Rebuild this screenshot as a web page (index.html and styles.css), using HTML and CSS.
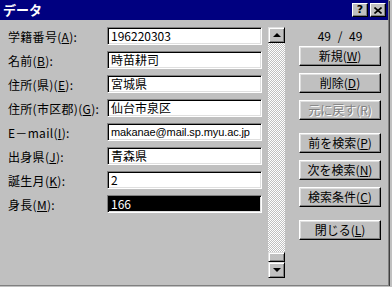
FILE: index.html
```html
<!DOCTYPE html>
<html lang="ja">
<head>
    <meta charset="UTF-8">
    <title>データ</title>
    <link rel="stylesheet" href="styles.css">
</head>
<body>
    <div class="window">
        <div class="titlebar">
            <span class="title">データ</span>
            <div class="caption-btns">
                <span class="cap-btn help">?</span>
                <span class="cap-btn close">
                    <svg width="8" height="7" viewBox="0 0 8 7"><path d="M0.5 0.5 L7.5 6.5 M7.5 0.5 L0.5 6.5" stroke="#000" stroke-width="1.6"/></svg>
                </span>
            </div>
        </div>
        <div class="content">
            <div class="form">
                <div class="row"><label>学籍番号(<u>A</u>):</label><div class="field">196220303</div></div>
                <div class="row"><label>名前(<u>B</u>):</label><div class="field">時苗耕司</div></div>
                <div class="row"><label>住所(県)(<u>E</u>):</label><div class="field">宮城県</div></div>
                <div class="row"><label>住所(市区郡)(<u>G</u>):</label><div class="field">仙台市泉区</div></div>
                <div class="row"><label>E－mail(<u>I</u>):</label><div class="field email">makanae@mail.sp.myu.ac.jp</div></div>
                <div class="row"><label>出身県(<u>J</u>):</label><div class="field">青森県</div></div>
                <div class="row"><label>誕生月(<u>K</u>):</label><div class="field">2</div></div>
                <div class="row"><label>身長(<u>M</u>):</label><div class="field selected">166</div></div>
            </div>
            <div class="scrollbar">
                <div class="sb-btn"><span class="arrow up"></span></div>
                <div class="sb-track"></div>
                <div class="sb-thumb"></div>
                <div class="sb-btn"><span class="arrow down"></span></div>
            </div>
            <div class="actions">
                <div class="counter">49 / 49</div>
                <button>新規(<u>W</u>)</button>
                <button>削除(<u>D</u>)</button>
                <button class="disabled">元に戻す(R)</button>
                <button class="spaced">前を検索(<u>P</u>)</button>
                <button>次を検索(<u>N</u>)</button>
                <button>検索条件(<u>C</u>)</button>
                <button class="spaced">閉じる(<u>L</u>)</button>
            </div>
        </div>
    </div>
</body>
</html>
```

FILE: styles.css
```css
body {
    margin: 0;
    background: #c0c0c0;
    font-family: "Noto Sans CJK JP", "DejaVu Sans", sans-serif;
    font-size: 12px;
    color: #000;
}
.window {
    width: 388px;
    height: 285px;
    background: #c0c0c0;
    border-right: 1px solid #808080;
    border-bottom: 1px solid #808080;
    box-shadow: 1px 1px 0 #404040;
}
.titlebar {
    height: 20px;
    background: #000080;
    display: flex;
    align-items: center;
    justify-content: space-between;
    padding: 0 2px 0 3px;
}
.title {
    color: #fff;
    font-weight: bold;
    font-size: 13px;
    line-height: 20px;
}
.caption-btns {
    display: flex;
    gap: 2px;
}
.cap-btn {
    width: 16px;
    height: 14px;
    box-sizing: border-box;
    background: #c0c0c0;
    border: 1px solid;
    border-color: #fff #000 #000 #fff;
    box-shadow: inset -1px -1px #808080;
    display: flex;
    align-items: center;
    justify-content: center;
    font-family: "DejaVu Sans", sans-serif;
    font-weight: bold;
    font-size: 11px;
    line-height: 12px;
}
.content {
    display: flex;
    padding: 7px 0 0 8px;
}
.form {
    display: flex;
    flex-direction: column;
    gap: 6px;
}
.row {
    display: flex;
    align-items: center;
    height: 18px;
}
.row label {
    width: 99px;
    white-space: nowrap;
    letter-spacing: 0.3px;
}
.field {
    width: 155px;
    height: 18px;
    box-sizing: border-box;
    background: #fff;
    border: 1px solid;
    border-color: #808080 #fff #fff #808080;
    box-shadow: inset 1px 1px #000, inset -1px -1px #dfdfdf;
    padding: 0 3px;
    line-height: 16px;
    white-space: nowrap;
    overflow: hidden;
}
.field.email {
    font-family: "Liberation Sans", Arial, sans-serif;
    font-size: 11px;
    letter-spacing: -0.1px;
}
.field.selected {
    background: #000;
    color: #fff;
}
.scrollbar {
    width: 17px;
    height: 251px;
    margin-left: 6px;
    display: flex;
    flex-direction: column;
}
.sb-btn, .sb-thumb {
    box-sizing: border-box;
    background: #c0c0c0;
    border: 1px solid;
    border-color: #dfdfdf #000 #000 #dfdfdf;
    box-shadow: inset 1px 1px #fff, inset -1px -1px #808080;
}
.sb-btn {
    height: 16px;
    display: flex;
    align-items: center;
    justify-content: center;
}
.sb-thumb {
    height: 10px;
}
.sb-track {
    flex: 1;
    background: repeating-conic-gradient(#fff 0 25%, #c0c0c0 0 50%);
    background-size: 2px 2px;
}
.arrow {
    width: 0;
    height: 0;
    border-left: 4px solid transparent;
    border-right: 4px solid transparent;
}
.arrow.up {
    border-bottom: 4px solid #000;
}
.arrow.down {
    border-top: 4px solid #000;
}
.actions {
    margin-left: 14px;
    width: 82px;
    display: flex;
    flex-direction: column;
}
.counter {
    height: 19px;
    line-height: 17px;
    text-align: center;
    word-spacing: 4px;
}
.actions button {
    height: 20px;
    margin-bottom: 7px;
    padding: 0;
    font-family: inherit;
    font-size: 12px;
    line-height: 16px;
    color: #000;
    background: #c0c0c0;
    border: 1px solid;
    border-color: #fff #000 #000 #fff;
    box-shadow: inset -1px -1px #808080, inset 1px 1px #dfdfdf;
}
.actions button.spaced {
    margin-top: 6px;
}
.actions button.disabled {
    color: #808080;
    text-shadow: 1px 1px 0 #fff;
}
```
